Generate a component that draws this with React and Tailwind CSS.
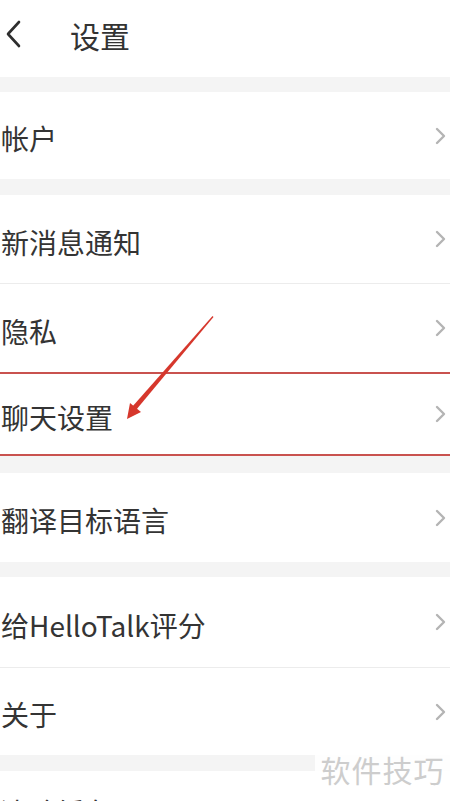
import React from 'react';

const Chevron = () => (
  <svg width="12" height="18" viewBox="0 0 12 18" className="mr-[4px]">
    <path d="M3 2 L10 9 L3 16" fill="none" stroke="#b4b4b4" strokeWidth="2.4" strokeLinecap="round" strokeLinejoin="round" />
  </svg>
);

const Row = ({ label, marked, height }) => (
  <div
    className={`flex items-center justify-between bg-white ${height} ${
      marked ? 'border-y-2 border-[#c9524f]' : ''
    }`}
  >
    <span className="text-[28px] text-[#343434] leading-none pl-[1px] pt-[5px]">{label}</span>
    <Chevron />
  </div>
);

const App = () => {
  return (
    <div
      className="relative w-[450px] h-[801px] overflow-hidden bg-[#f4f4f4]"
      style={{ fontFamily: '"Noto Sans CJK SC", "Noto Sans", sans-serif' }}
    >
      {/* header */}
      <div className="flex items-start h-[77px] bg-white pt-[20px]">
        <svg width="20" height="28" viewBox="0 0 20 28" className="ml-[3px]">
          <path d="M16 2 L5 14 L16 26" fill="none" stroke="#2e2e2e" strokeWidth="2.6" strokeLinecap="round" strokeLinejoin="round" />
        </svg>
        <span className="ml-[47px] text-[30px] text-[#333] leading-none">设置</span>
      </div>

      <div className="flex flex-col pt-[15px]">
        <Row label="帐户" height="h-[87px]" />

        <div className="flex flex-col bg-white mt-[16px]">
          <Row label="新消息通知" height="h-[88px]" />
          <div className="h-px bg-[#ececec]" />
          <Row label="隐私" height="h-[88px]" />
          <Row label="聊天设置" marked height="h-[84px]" />
        </div>

        <div className="mt-[17px]">
          <Row label="翻译目标语言" height="h-[89px]" />
        </div>

        <div className="flex flex-col bg-white mt-[15px]">
          <Row label="给HelloTalk评分" height="h-[90px]" />
          <div className="h-px bg-[#ececec]" />
          <Row label="关于" height="h-[87px]" />
        </div>

        <div className="flex items-start h-[60px] bg-white pt-[27px] mt-[16px]">
          <span className="text-[28px] text-[#343434] leading-none">清除缓存</span>
        </div>
      </div>

      {/* red annotation arrow */}
      <svg className="absolute left-0 top-0 pointer-events-none" width="450" height="801">
        <polygon points="212.5,316 213.5,317 136,410 132,407" fill="#d6372c" />
        <polygon points="127,419 130,403 141,412" fill="#d6372c" />
      </svg>

      {/* watermark */}
      <div className="absolute left-[315px] top-[749px] w-[135px] h-[40px] bg-white/90 flex items-center justify-center">
        <span className="text-[30px] text-[#cdcdcd] leading-none tracking-[1px]">软件技巧</span>
      </div>
    </div>
  );
};

export default App;
